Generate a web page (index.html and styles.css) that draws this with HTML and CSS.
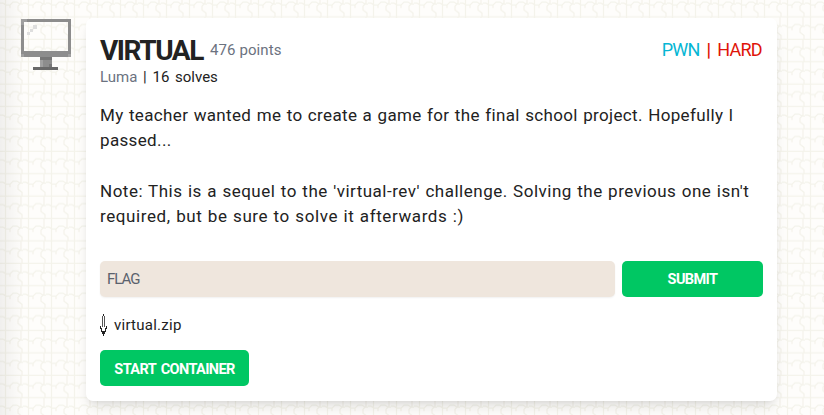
FILE: index.html
```html
<!DOCTYPE html>
<html lang="en">
<head>
<meta charset="utf-8">
<title>Virtual</title>
<link rel="stylesheet" href="styles.css">
</head>
<body>
<svg class="weave" width="824" height="415" aria-hidden="true">
  <defs>
    <pattern id="knit" width="23" height="22.4" patternUnits="userSpaceOnUse">
      <path d="M5.500 0V22.400M0 17H23M0 3H3L6 5H10L13 2H17L20 4H23M21 0V3L18 6V10L22 13V17M10 5V8M21 17V22.400" fill="none" stroke="#f4f3eb" stroke-width="1.300"/>
    </pattern>
  </defs>
  <rect width="824" height="415" fill="url(#knit)"/>
</svg>
<main class="challenge">
  <svg class="monitor" viewBox="0 0 50 51" shape-rendering="crispEdges" aria-hidden="true">
    <path fill="#8d8d8d" d="M0 0H50V38H0ZM3 3V32H47V3Z" fill-rule="evenodd"/>
    <path fill="#a0a0a0" d="M0 0H6V3H3V6H0ZM0 35H3V38H0ZM47 35H50V38H47Z"/>
    <path fill="#dedede" d="M12 6H16V10H12ZM9 10H12V13H9ZM6 13H9V16H6Z"/>
    <path fill="#8d8d8d" d="M19 38H31V48H19Z"/>
    <path fill="#777" d="M19 38H31V41H19ZM28 45H31V48H28Z"/>
    <path fill="#a0a0a0" d="M19 41H22V48H19Z"/>
    <path fill="#696969" d="M12 48H37V51H12Z"/>
  </svg>
  <section class="card">
    <header class="heading">
      <h1>VIRTUAL</h1>
      <span class="points">476 points</span>
      <span class="tags"><span class="category">PWN</span> <b>|</b> HARD</span>
    </header>
    <div class="meta"><span class="author">Luma</span> | 16 solves</div>
    <div class="description">
      <div class="l1">My teacher wanted me to create a game for the final school project. Hopefully l</div>
      <div class="l2">passed...</div>
      <br>
      <div class="l3">Note: This is a sequel to the 'virtual-rev' challenge. Solving the previous one isn't</div>
      <div class="l4">required, but be sure to solve it afterwards :)</div>
    </div>
    <form class="answer">
      <input type="text" placeholder="FLAG" aria-label="Flag">
      <button type="button" class="submit"><span>SUBMIT</span></button>
    </form>
    <a class="file">
      <svg class="arrow" viewBox="0 0 7 22" shape-rendering="crispEdges" aria-hidden="true">
        <path fill="#222" d="M3 0H4V2H3ZM0 12H1V15H0ZM6 12H7V15H6ZM1 14H2V18H1ZM5 14H6V18H5ZM2 17H5V20H2ZM3 20H4V22H3Z"/>
        <path fill="#555" d="M2 2H3V13H2ZM4 2H5V13H4Z"/>
      </svg>
      <span>virtual.zip</span>
    </a>
    <button type="button" class="start"><span>START CONTAINER</span></button>
  </section>
</main>
</body>
</html>
```
FILE: styles.css
```css
* { box-sizing: border-box; }
body {
  margin: 0;
  height: 415px;
  overflow: hidden;
  background: #fefdfb;
  color: #222;
  font-family: Roboto, "Liberation Sans", sans-serif;
}
.weave { position: absolute; inset: 0; z-index: -1; }
body::before {
  content: "";
  position: absolute;
  inset: 0 auto 0 0;
  width: 24px;
  background: linear-gradient(90deg, rgba(0,0,0,.055), transparent);
}
.challenge { display: flex; align-items: flex-start; padding: 18px 0 0 21px; }
.monitor { width: 50px; height: 51px; margin: 1px 15px 0 0; }
.card {
  width: 691px;
  height: 383px;
  padding: 15px 14px;
  border-radius: 7px;
  background: #fff;
  box-shadow: 0 9px 14px -3px rgba(0,0,0,.1), 0 3px 6px -3px rgba(0,0,0,.1);
}
.heading { display: flex; align-items: center; height: 32px; white-space: nowrap; }
h1 { width: 103px; margin: 3px 7px 0 0; font-size: 28px; line-height: 32px; font-weight: 700; letter-spacing: -1.450px; }
.points { padding-top: 2px; color: #6b7280; font-size: 15px; letter-spacing: .1px; }
.tags { margin-left: auto; padding-right: 1px; color: #e01409; font-size: 18px; letter-spacing: -.7px; word-spacing: 3px; }
.category { color: #06b6d4; }
.meta { height: 22px; font-size: 15px; line-height: 24px; word-spacing: 2px; }
.author { color: #6b7280; }
.description { margin-top: 16px; font-size: 17px; line-height: 25.300px; white-space: nowrap; }
.l1 { letter-spacing: .35px; word-spacing: .8px; }
.l2 { letter-spacing: .35px; }
.l3 { letter-spacing: .5px; word-spacing: .7px; }
.l4 { letter-spacing: .6px; word-spacing: .6px; }
.answer { display: flex; gap: 7px; margin: 32px 0 0; }
input {
  width: 515px;
  height: 36px;
  padding: 0 7px;
  border: 0;
  border-radius: 5px;
  background: #efe6dd;
  box-shadow: 0 1px 2px rgba(0,0,0,.06);
  font: 15px Roboto, sans-serif;
}
input::placeholder { color: #5b626d; opacity: 1; letter-spacing: -1px; }
button {
  height: 36px;
  padding: 0;
  border: 0;
  border-radius: 5px;
  background: #00c763;
  color: #fff;
  font: 700 14.500px Roboto, sans-serif;
  letter-spacing: -.6px;
}
.submit { width: 141px; }
.start { display: block; width: 149px; margin-top: 14px; white-space: nowrap; word-spacing: 2px; }
.start span { position: relative; top: 1px; }
.file { display: flex; align-items: center; gap: 7px; height: 22px; margin-top: 17px; font-size: 15px; letter-spacing: .25px; }
.arrow { width: 7px; height: 22px; }
```
